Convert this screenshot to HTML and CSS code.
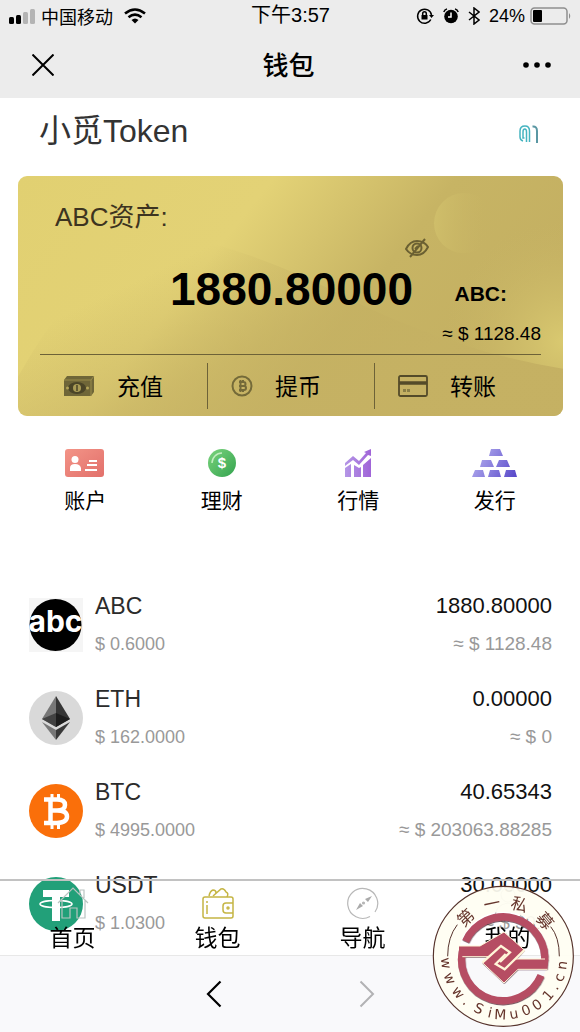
FILE: index.html
```html
<!DOCTYPE html>
<html lang="zh-CN">
<head>
<meta charset="utf-8">
<meta name="viewport" content="width=device-width, initial-scale=1">
<title>钱包</title>
<link rel="stylesheet" href="styles.css">
</head>
<body>
<header class="top">
  <div class="status">
    <div class="status-left">
      <svg width="26" height="16" viewBox="0 0 26 16"><rect x="0" y="9" width="5" height="7" rx="1.5"/><rect x="7" y="7" width="5" height="9" rx="1.5"/><rect x="14" y="4" width="5" height="12" rx="1.5" fill="#b4b4b4"/><rect x="21" y="1" width="5" height="15" rx="1.5" fill="#b4b4b4"/></svg>
      <span>中国移动</span>
      <svg class="wifi" width="22" height="16" viewBox="0 0 22 16" fill="none" stroke="#000" stroke-width="2.6"><path d="M1 5.5Q11-2.5 21 5.5M4.500 9.200Q11 4 17.500 9.200"/><path d="M7.500 12Q11 9 14.500 12L11 15.500Z" fill="#000" stroke="none"/></svg>
    </div>
    <time class="clock">下午3:57</time>
    <div class="status-right">
      <svg width="18" height="18" viewBox="0 0 18 18" fill="none" stroke="#000" stroke-width="1.500"><path d="M14.800 12.500A7 7 0 1 1 15.500 8"/><path d="M13 8h5l-2.500 3Z" fill="#000" stroke="none"/><path d="M5.500 8h6v4.500h-6Z" fill="#000" stroke="none"/><path d="M6.700 8V6.500a1.800 1.800 0 0 1 3.600 0V8"/></svg>
      <svg width="16" height="16" viewBox="0 0 16 16"><circle cx="8" cy="8.500" r="6.800"/><path d="M.8 4A5 5 0 0 1 4 .9M15.200 4A5 5 0 0 0 12 .9" fill="none" stroke="#000" stroke-width="1.500"/><path d="M8 4.500V9H5" fill="none" stroke="#fff" stroke-width="1.500"/></svg>
      <svg width="12" height="18" viewBox="0 0 12 18" fill="none" stroke="#000" stroke-width="1.500"><path d="M1 5l10 8-5 4V1l5 4L1 13"/></svg>
      <span>24%</span>
      <svg class="battery" width="42" height="18" viewBox="0 0 42 18"><rect x="1" y="1" width="36" height="16" rx="3.500" fill="none" stroke="#8e8e8e" stroke-width="1.500"/><rect x="3" y="3" width="9" height="12" rx="1"/><path d="M39 6q2.500 3 0 6Z" fill="#8e8e8e"/></svg>
    </div>
  </div>
  <div class="titlebar">
    <button class="plain" aria-label="关闭"><svg width="22" height="22" viewBox="0 0 22 22" fill="none" stroke="#000" stroke-width="2"><path d="M0.500.5l21 21M21.500.5l-21 21"/></svg></button>
    <h1>钱包</h1>
    <button class="plain" aria-label="更多"><svg width="28" height="6" viewBox="0 0 28 6"><circle cx="3" cy="3" r="2.800"/><circle cx="14" cy="3" r="2.800"/><circle cx="25" cy="3" r="2.800"/></svg></button>
  </div>
</header>

<main>
  <div class="brand">
    <h2>小觅Token</h2>
    <button class="plain" aria-label="扫码"><svg width="20" height="20" viewBox="0 0 20 20" fill="none" stroke-width="1.500"><path d="M4 17Q1 16 1 13V7Q1 2 6 2Q10.500 2 10.500 7V18M7.500 18V8Q7.500 5 5.800 5Q4 5 4 8V14H5.500" stroke="#45b4c0"/><path d="M13.500 2.500Q18 2 18 7V19" stroke="#5a97a3" stroke-width="2"/></svg></button>
  </div>

  <section class="card">
    <svg class="card-art" viewBox="0 0 545 239" preserveAspectRatio="none">
      <defs>
        <linearGradient id="base" x1="0" y1="0" x2="1" y2=".35"><stop offset="0" stop-color="#e1d071"/><stop offset=".42" stop-color="#e3d276"/><stop offset=".72" stop-color="#c7b464"/><stop offset="1" stop-color="#c4b062"/></linearGradient>
        <linearGradient id="wave" gradientUnits="userSpaceOnUse" x1="190" y1="70" x2="270" y2="239"><stop offset="0" stop-color="#c4b062" stop-opacity="0"/><stop offset=".6" stop-color="#c4b062" stop-opacity=".6"/><stop offset="1" stop-color="#c5b163" stop-opacity=".85"/></linearGradient>
        <radialGradient id="shine" gradientUnits="userSpaceOnUse" cx="545" cy="165" r="120"><stop offset="0" stop-color="#d9c970"/><stop offset="1" stop-color="#c8b565" stop-opacity="0"/></radialGradient>
        <linearGradient id="moon" x1="0" y1=".4" x2="1" y2=".5"><stop offset="0" stop-color="#cfbe6a"/><stop offset="1" stop-color="#c5b162" stop-opacity="0"/></linearGradient>
      </defs>
      <rect width="545" height="239" fill="url(#base)"/>
      <path d="M0 200Q90 40 180 63Q260 85 330 122Q440 175 545 191V239H0Z" fill="url(#wave)"/>
      <path d="M400 40H545V192Q460 178 400 150Z" fill="url(#shine)"/>
      <circle cx="446" cy="47" r="30" fill="url(#moon)"/>
    </svg>
    <div class="card-body">
      <h3>ABC资产:</h3>
      <div class="balance">
        <button class="plain eye" aria-label="隐藏金额"><svg width="24" height="20" viewBox="0 0 24 20" fill="none" stroke="#6b6032" stroke-width="2"><path d="M1 11Q5 3 12 3T23 9Q19 17 12 17T1 11Z"/><circle cx="12" cy="10" r="4.500"/><path d="M20 1L5 19"/><path d="M10 11l3-3"/></svg></button>
        <strong class="amount">1880.80000</strong>
        <strong class="unit">ABC:</strong>
        <span class="approx">≈ $ 1128.48</span>
      </div>
      <div class="actions">
        <button class="plain"><svg width="32" height="22" viewBox="0 0 32 22"><path d="M1 5L4 1H31V17L28 21H1Z" fill="#6f6638"/><path d="M1 5H28V21M28 5l3-4" stroke="#9a8c4b" fill="none"/><ellipse cx="14" cy="13" rx="9" ry="6" fill="#4b4527"/><circle cx="14" cy="13" r="4" fill="#a99b55"/><path d="M14 10v6" stroke="#4b4527" stroke-width="1.500"/><circle cx="4.500" cy="13" r="1.500" fill="#b3a458"/><circle cx="24.500" cy="13" r="1.500" fill="#b3a458"/></svg><span>充值</span></button>
        <button class="plain"><svg width="22" height="22" viewBox="0 0 22 22" fill="none" stroke="#746a39"><circle cx="11" cy="11" r="9.500" stroke-width="2"/><path d="M8 7h4.500a2 2 0 0 1 0 4H8M9 11h4a2 2 0 0 1 0 4H8M9.500 5v12M12 5v2M12 15v2" stroke-width="2"/></svg><span>提币</span></button>
        <button class="plain"><svg width="30" height="22" viewBox="0 0 30 22" fill="none" stroke="#544b29"><rect x="1" y="1" width="28" height="20" rx="1.500" stroke-width="1.800"/><path d="M1 8h28" stroke-width="3.500"/><path d="M5 15.500h8" stroke="#8b7f46" stroke-width="3" stroke-dasharray="3 1"/></svg><span>转账</span></button>
      </div>
    </div>
  </section>

  <nav class="shortcuts">
    <a href="#account"><svg width="40" height="28" viewBox="0 0 40 28"><defs><linearGradient id="red" x1="0" x2="1" y2="1"><stop stop-color="#f39487"/><stop offset="1" stop-color="#e2706b"/></linearGradient></defs><rect width="39" height="28" rx="3" fill="url(#red)"/><g fill="#fff"><circle cx="10" cy="10.500" r="3.500"/><path d="M5 22v-3q0-4 5-4t6 4v3Z"/><path d="M24 11h8v2h-8ZM22 15h10v2H22ZM20 20h12v2H20Z"/></g></svg><span>账户</span></a>
    <a href="#finance"><svg width="28" height="28" viewBox="0 0 28 28"><defs><linearGradient id="green" x1="0" x2="1" y2="1"><stop stop-color="#7bd47d"/><stop offset="1" stop-color="#34a34f"/></linearGradient></defs><circle cx="14" cy="14" r="14" fill="url(#green)"/><path d="M4 14A10 10 0 0 1 14 4" fill="none" stroke="#c3edc0" stroke-width="1.500"/><text class="coin-sign" x="14" y="19" text-anchor="middle">$</text></svg><span>理财</span></a>
    <a href="#market"><svg width="28" height="28" viewBox="0 0 28 28"><defs><linearGradient id="purple" x1="0" x2="1"><stop stop-color="#b496e6"/><stop offset="1" stop-color="#a064d8"/></linearGradient></defs><g fill="url(#purple)"><path d="M1 19l6-4v13H1ZM10 16l5 3 2-1v10h-7ZM19 16l8-7v19h-8Z"/><path d="M1 14l8-7 6 5 7-8-2-1 7-3v7l-3-1-9 10-6-5-8 6Z"/></g></svg><span>行情</span></a>
    <a href="#issue"><svg width="46" height="28" viewBox="0 0 46 28"><defs><linearGradient id="ingot" gradientUnits="userSpaceOnUse" x1="0" y1="0" x2="46" y2="28"><stop stop-color="#bdb8f2"/><stop offset="1" stop-color="#5444c8"/></linearGradient></defs><path fill="url(#ingot)" d="M19 0h9l3 7H17ZM10 11h9l3 7H8ZM27 11h8l3 7H24ZM3 21h8l2 7H0ZM18 21h9l2 7H16ZM34 21h9l2 7H32Z"/></svg><span>发行</span></a>
  </nav>

  <ul class="coins">
    <li>
      <svg class="logo" viewBox="0 0 54 54"><rect width="54" height="54" fill="#f5f5f5"/><circle cx="26.500" cy="27" r="26" /><text class="abc" x="26.500" y="34" text-anchor="middle">abc</text></svg>
      <div class="coin"><b>ABC</b><small>$ 0.6000</small></div>
      <div class="coin sum"><b>1880.80000</b><small>≈ $ 1128.48</small></div>
    </li>
    <li>
      <svg class="logo" viewBox="0 0 54 54"><circle cx="27" cy="27" r="27" fill="#d9d9d9"/><path d="M27 5L13 28l14 8Z" fill="#777"/><path d="M27 5l14 23-14 8Z" fill="#353535"/><path d="M13 28l14-6v14Z" fill="#424242"/><path d="M41 28l-14-6v14Z" fill="#1d1d1d"/><path d="M13 31l14 8v10Z" fill="#777"/><path d="M41 31l-14 8v10Z" fill="#383838"/></svg>
      <div class="coin"><b>ETH</b><small>$ 162.0000</small></div>
      <div class="coin sum"><b>0.00000</b><small>≈ $ 0</small></div>
    </li>
    <li>
      <svg class="logo" viewBox="0 0 54 54"><circle cx="27" cy="27" r="27" fill="#fa6f0a"/><g fill="none" stroke="#fff"><path d="M15 15.500h13q8 0 8 5.500t-8 5.500h-7M28 26.500q10 0 10 6t-10 6.500H15M21.500 15v24" stroke-width="4.500"/><path d="M23 10v6M29.500 10v6M23 39v6M29.500 39v6" stroke-width="3"/></g></svg>
      <div class="coin"><b>BTC</b><small>$ 4995.0000</small></div>
      <div class="coin sum"><b>40.65343</b><small>≈ $ 203063.88285</small></div>
    </li>
    <li>
      <svg class="logo" viewBox="0 0 54 54"><circle cx="27" cy="27" r="27" fill="#22a079"/><path d="M14 13h26v7h-9v24h-8V20h-9Z" fill="#fff"/><ellipse cx="27" cy="27" rx="16" ry="3.500" fill="none" stroke="#fff" stroke-width="1.500"/></svg>
      <div class="coin"><b>USDT</b><small>$ 1.0300</small></div>
      <div class="coin sum"><b>30.00000</b><small>≈ $ 30.9</small></div>
    </li>
  </ul>
</main>

<footer class="dock">
  <nav class="tabs">
    <a href="#home"><svg width="34" height="34" viewBox="0 0 34 34" fill="none" stroke="#b9c4c1" stroke-width="1.200"><path d="M2 17L17 2l15 15M6 14v18h8V22h7v10h8V14M24 8V4h4v8"/></svg><span>首页</span></a>
    <a href="#wallet"><svg width="34" height="34" viewBox="0 0 34 34" fill="none" stroke="#c5b544" stroke-width="1.500"><rect x="2" y="11" width="30" height="21" rx="2"/><path d="M8 10q1-5 4-6 3 0 3 3M12 10l8-7q3-1 5 3 3 1 1 5M32 17h-7q-3 0-3 3v4q0 3 3 3h7M6 15v2M6 19v9"/><circle cx="27" cy="22" r="1"/></svg><span>钱包</span></a>
    <a href="#nav"><svg width="34" height="34" viewBox="0 0 34 34" fill="none" stroke="#b8b8b8" stroke-width="1.200"><path d="M24 30.500A15 15 0 1 1 29 26"/><path d="M10 24l4-7 3 3ZM26 10l-7 3 3 3Z" fill="#aaa" stroke="none"/><circle cx="17.500" cy="17" r="1" fill="#aaa"/></svg><span>导航</span></a>
    <a href="#mine"><svg width="34" height="34" viewBox="0 0 34 34" fill="none" stroke="#c4c4c4" stroke-width="1.200"><circle cx="17" cy="9" r="7"/><path d="M4 32q0-13 13-15 13 2 13 15"/></svg><span>我的</span></a>
  </nav>
  <div class="browser">
    <button class="plain" aria-label="后退"><svg width="16" height="28" viewBox="0 0 16 28" fill="none" stroke="#000" stroke-width="2.200"><path d="M14.500 1.500L2 14l12.500 12.500"/></svg></button>
    <button class="plain" aria-label="前进"><svg width="16" height="28" viewBox="0 0 16 28" fill="none" stroke="#b2b2b4" stroke-width="2"><path d="M1.500 1.500L14 14 1.500 26.500"/></svg></button>
  </div>
</footer>

<svg class="stamp" viewBox="0 0 438 438">
  <defs><filter id="shade" x="-10%" y="-10%" width="120%" height="120%"><feDropShadow dx="1" dy="3" stdDeviation="2" flood-color="#3c1420" flood-opacity=".7"/></filter></defs>
  <circle cx="220" cy="223" r="172" fill="none" stroke="#fffef2" stroke-width="76" opacity=".93"/>
  <circle cx="220" cy="223" r="210" fill="none" stroke="#56332c" stroke-width="3.500"/>
  <path d="M53 223Q53 165 82 128M388 223Q388 165 362 134" fill="none" stroke="#56332c" stroke-width="3"/>
  <g filter="url(#shade)">
    <path d="M107 178A124 124 0 0 1 343 246M333 280A124 124 0 0 1 97 208" fill="none" stroke="#b64d63" stroke-width="22"/>
    <path d="M87 192H150L222 150L283 204L258 231H355L352 262H264L222 303L157 242L176 224H87Z" fill="#b64d63"/>
  </g>
  <g fill="none" stroke="#fff6d8" stroke-width="7">
    <path d="M157 242L213 192L240 211L210 240"/>
    <path d="M283 204L224 262L197 246L227 216"/>
    <path d="M87 192H150L222 150L283 204L258 231H345M97 224H176M352 262H264L222 303L157 242" stroke-width="3"/>
  </g>
  <text class="stamp-name" x="101 165 239 315" y="137 88 77 109" rotate="-43 -12 17 50">第一私募</text>
  <text class="stamp-site" x="32 40 63 95 128 171 192 241 281 318 356 381 397 408" y="228 279 327 364 387 405 411 412 403 388 359 327 302 265" rotate="83 67 51 39 25 13 3 -10 -22 -34 -49 -59 -69 -82">www.SiMu001.cn</text>
</svg>
</body>
</html>
```
FILE: styles.css
```css
* { box-sizing: border-box; }

body {
  margin: 0;
  min-height: 100vh;
  padding-bottom: 77px;
  background: #fff;
  color: #000;
  font-family: "Liberation Sans", "Noto Sans CJK SC", sans-serif;
}

h1, h2, h3, ul { margin: 0; padding: 0; font-weight: 400; list-style: none; }
svg { display: block; flex: none; }
a { color: inherit; text-decoration: none; }

.plain {
  padding: 0;
  border: 0;
  background: none;
  color: inherit;
  font: inherit;
  cursor: pointer;
}

.top { background: #ececec; }

.status {
  display: grid;
  grid-template-columns: 1fr auto 1fr;
  align-items: center;
  height: 32px;
  padding: 0 8px 0 9px;
  font-size: 18px;
}
.status-left, .status-right { display: flex; align-items: center; gap: 6px; }
.status-right { justify-content: flex-end; gap: 9px; }
.wifi { margin-left: 5px; }
.battery { margin-left: -4px; }
.clock { padding-bottom: 3px; font-size: 20px; line-height: 24px; }

.titlebar {
  display: flex;
  align-items: center;
  justify-content: space-between;
  height: 66px;
  padding: 0 29px 0 32px;
}
.titlebar h1 { padding-bottom: 4px; font-size: 26px; font-weight: 500; }

.brand {
  display: flex;
  align-items: center;
  justify-content: space-between;
  height: 78px;
  padding: 0 41px 6px 39px;
}
.brand h2 { padding-bottom: 6px; color: #333; font-size: 32px; line-height: 40px; }

.card {
  position: relative;
  margin: 0 17px 0 18px;
  border-radius: 9px;
  overflow: hidden;
}
.card-art { position: absolute; inset: 0; width: 100%; height: 100%; }
.card-body { position: relative; padding: 24px 22px 7px; }
.card h3 {
  padding-left: 15px;
  color: #3d3420;
  font-size: 26px;
  line-height: 34px;
}

.balance {
  display: grid;
  grid-template-columns: 1fr 112px;
  grid-template-rows: 28px 54px 38px;
  align-items: center;
  justify-items: end;
  border-bottom: 1px solid #6d6238;
}
.eye { grid-column: 1; }
.amount { grid-area: 2 / 1; padding-right: 16px; font-size: 46px; }
.unit { grid-area: 2 / 2; padding: 10px 34px 0 0; font-size: 21px; }
.approx { grid-area: 3 / 2; font-size: 19px; line-height: 24px; padding-bottom: 2px; white-space: nowrap; }

.actions {
  display: grid;
  grid-template-columns: repeat(3, 1fr);
  padding-top: 8px;
}
.actions button {
  display: flex;
  align-items: center;
  gap: 22px;
  height: 46px;
  padding-left: 23px;
  font-size: 23px;
}
.actions span { padding-bottom: 3px; }
.actions button + button { border-left: 1px solid #6d6238; }

.shortcuts {
  display: grid;
  grid-template-columns: repeat(4, 1fr);
  margin: 33px 17px 0;
}
.shortcuts a {
  display: flex;
  flex-direction: column;
  align-items: center;
  gap: 8px;
  font-size: 21px;
  line-height: 32px;
}
.coin-sign { fill: #fff; font-size: 15px; font-weight: 700; }

.coins { padding: 66px 28px 0 29px; }
.coins li { display: flex; gap: 12px; height: 93px; padding-top: 10px; }
.logo { width: 54px; height: 54px; margin-top: 5px; }
.abc { fill: #fff; font: 700 30px Inter, sans-serif; }
.coin { display: flex; flex-direction: column; gap: 12px; }
.coin b { color: #2b2b2b; font-size: 23px; font-weight: 400; line-height: 26px; }
.coin small { color: #999; font-size: 18px; line-height: 26px; }
.sum { margin-left: auto; text-align: right; }
.sum b { color: #111; font-size: 22px; }
.sum small { font-size: 19px; }

.dock { position: fixed; inset: auto 0 0; }
.tabs {
  display: grid;
  grid-template-columns: repeat(4, 1fr);
  height: 76px;
  border-top: 2px solid #c2c2c2;
}
.tabs a {
  display: flex;
  flex-direction: column;
  align-items: center;
  padding-top: 5px;
  font-size: 23px;
  line-height: 36px;
}
.browser {
  display: flex;
  align-items: center;
  justify-content: center;
  gap: 137px;
  height: 77px;
  border-top: 1px solid #e8e8e8;
  background: #f9f9fb;
}

.stamp { position: fixed; right: 4px; bottom: 4px; width: 146px; height: 146px; }
.stamp text { fill: #65352c; }
.stamp-name { font: 400 50px "Noto Sans CJK SC", sans-serif; }
.stamp-site { font: 400 42px "DejaVu Sans", sans-serif; }
```
